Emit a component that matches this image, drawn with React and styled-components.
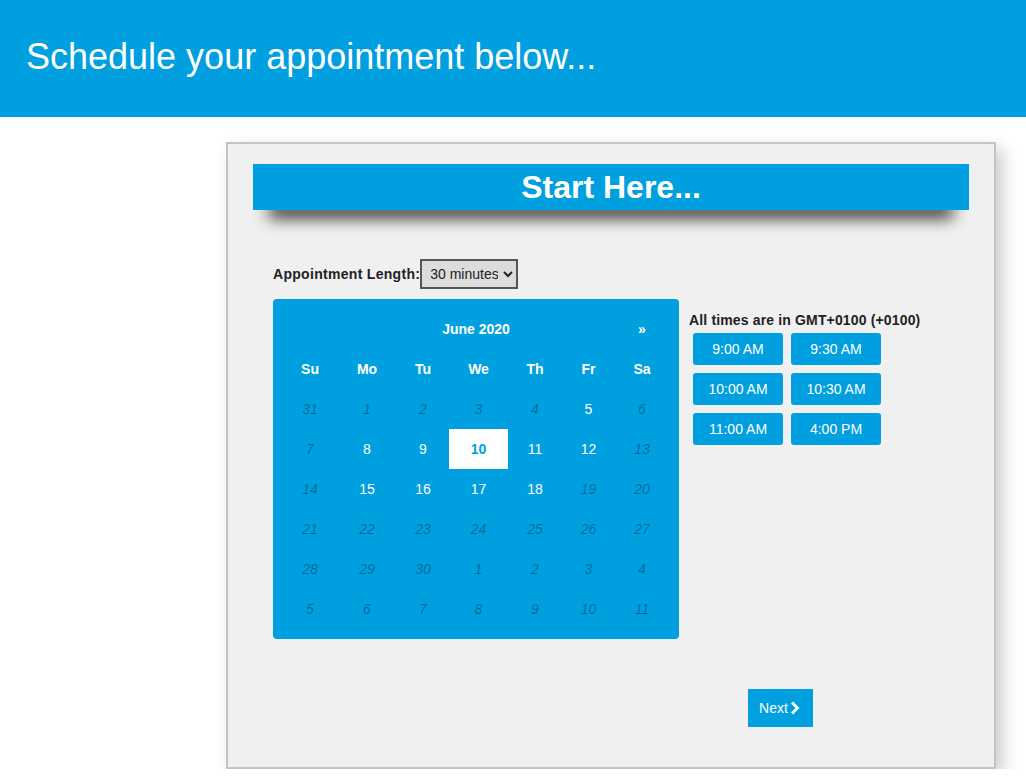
import React from "react";
import styled, { createGlobalStyle } from "styled-components";

const Global = createGlobalStyle`
  html, body { margin: 0; padding: 0; background: #fff; }
  body { font-family: "Liberation Sans", Arial, sans-serif; }
`;

const BLUE = "#009fe0";

const TopBar = styled.header`
  height: 117px;
  background: ${BLUE};
  display: flex;
  align-items: center;
  padding-left: 26px;
  box-sizing: border-box;
`;

const TopTitle = styled.h1`
  margin: 0 0 4px 0;
  font-size: 36px;
  font-weight: normal;
  color: #fff;
`;

const Card = styled.section`
  margin: 25px 0 0 226px;
  width: 770px;
  height: 627px;
  box-sizing: border-box;
  border: 2px solid #c4c4c4;
  background: #f0f0f0;
  box-shadow: 7px 7px 16px rgba(0, 0, 0, 0.2);
  padding: 20px 25px;
`;

const Banner = styled.div`
  height: 46px;
  background: ${BLUE};
  color: #fff;
  font-weight: bold;
  font-size: 32px;
  text-align: center;
  line-height: 46px;
  box-shadow: 0 24px 16px -16px rgba(0, 0, 0, 0.85);
  margin-bottom: 49px;
`;

const Body = styled.div`
  padding-left: 20px;
`;

const LengthRow = styled.div`
  display: flex;
  align-items: center;
  height: 30px;
  margin-bottom: 10px;
`;

const Label = styled.label`
  font-size: 14px;
  font-weight: bold;
  color: #222;
  letter-spacing: 0.3px;
`;

const Select = styled.select`
  height: 30px;
  box-sizing: border-box;
  border: 2px solid #555;
  background: #dcdcdc;
  font-family: "Liberation Sans", Arial, sans-serif;
  font-size: 14px;
  color: #222;
  padding: 0 2px 0 4px;
  border-radius: 0;
  width: 98px;
`;

const Main = styled.div`
  display: flex;
  gap: 10px;
  align-items: flex-start;
`;

const Calendar = styled.div`
  width: 406px;
  height: 340px;
  box-sizing: border-box;
  background: ${BLUE};
  border-radius: 4px;
  padding: 10px;
  display: grid;
  grid-template-columns: 54px 60px 52px 59px 54px 53px 54px;
  grid-auto-rows: 40px;
`;

const Cell = styled.div`
  display: flex;
  align-items: center;
  justify-content: center;
  font-size: 14px;
  color: ${(p) => (p.$muted ? "rgba(0,0,0,0.34)" : p.$active ? BLUE : "#fff")};
  font-style: ${(p) => (p.$muted ? "italic" : "normal")};
  font-weight: ${(p) => (p.$active || p.$bold ? "bold" : "normal")};
  background: ${(p) => (p.$active ? "#fff" : "transparent")};
  grid-column: ${(p) => p.$span || "auto"};
`;

const Times = styled.div`
  padding-top: 13px;
`;

const TimesNote = styled.div`
  font-size: 14px;
  font-weight: bold;
  color: #222;
  letter-spacing: 0.15px;
  margin-bottom: 5px;
`;

const TimeGrid = styled.div`
  display: grid;
  grid-template-columns: 90px 90px;
  gap: 8px;
  padding-left: 4px;
`;

const TimeButton = styled.button`
  height: 32px;
  border: none;
  border-radius: 3px;
  background: ${BLUE};
  color: #fff;
  font-family: "Liberation Sans", Arial, sans-serif;
  font-size: 14px;
  padding: 0;
`;

const Footer = styled.div`
  margin: 50px 0 0 475px;
`;

const NextButton = styled.button`
  width: 65px;
  height: 38px;
  border: none;
  background: ${BLUE};
  color: #fff;
  font-family: "Liberation Sans", Arial, sans-serif;
  font-size: 14px;
  display: flex;
  align-items: center;
  justify-content: center;
  gap: 2px;
  padding: 0 2px 0 0;
`;

const days = [
  [["31", 1], ["1", 1], ["2", 1], ["3", 1], ["4", 1], ["5", 0], ["6", 1]],
  [["7", 1], ["8", 0], ["9", 0], ["10", 2], ["11", 0], ["12", 0], ["13", 1]],
  [["14", 1], ["15", 0], ["16", 0], ["17", 0], ["18", 0], ["19", 1], ["20", 1]],
  [["21", 1], ["22", 1], ["23", 1], ["24", 1], ["25", 1], ["26", 1], ["27", 1]],
  [["28", 1], ["29", 1], ["30", 1], ["1", 1], ["2", 1], ["3", 1], ["4", 1]],
  [["5", 1], ["6", 1], ["7", 1], ["8", 1], ["9", 1], ["10", 1], ["11", 1]],
];

const weekdays = ["Su", "Mo", "Tu", "We", "Th", "Fr", "Sa"];
const slots = ["9:00 AM", "9:30 AM", "10:00 AM", "10:30 AM", "11:00 AM", "4:00 PM"];

const Chevron = () => (
  <svg width="10" height="14" viewBox="0 0 10 14" aria-hidden="true">
    <path d="M2 1.5 L7.5 7 L2 12.5" fill="none" stroke="#fff" strokeWidth="2.8" />
  </svg>
);

export default function App() {
  return (
    <>
      <Global />
      <TopBar>
        <TopTitle>Schedule your appointment below...</TopTitle>
      </TopBar>
      <Card>
        <Banner>Start Here...</Banner>
        <Body>
          <LengthRow>
            <Label htmlFor="len">Appointment Length:</Label>
            <Select id="len" defaultValue="30">
              <option value="30">30 minutes</option>
              <option value="60">60 minutes</option>
            </Select>
          </LengthRow>
          <Main>
            <Calendar>
              <Cell />
              <Cell $bold $span="span 5">June 2020</Cell>
              <Cell $bold>»</Cell>
              {weekdays.map((w) => (
                <Cell key={w} $bold>{w}</Cell>
              ))}
              {days.flat().map(([d, kind], i) => (
                <Cell key={i} $muted={kind === 1} $active={kind === 2}>
                  {d}
                </Cell>
              ))}
            </Calendar>
            <Times>
              <TimesNote>All times are in GMT+0100 (+0100)</TimesNote>
              <TimeGrid>
                {slots.map((s) => (
                  <TimeButton key={s}>{s}</TimeButton>
                ))}
              </TimeGrid>
            </Times>
          </Main>
          <Footer>
            <NextButton>
              Next <Chevron />
            </NextButton>
          </Footer>
        </Body>
      </Card>
    </>
  );
}
